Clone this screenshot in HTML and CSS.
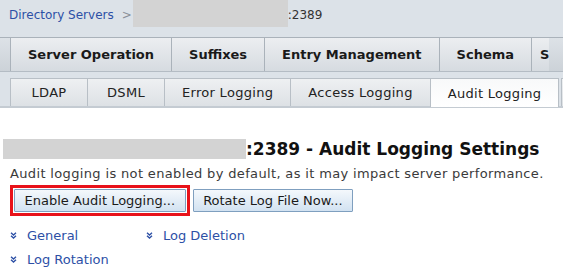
FILE: index.html
```html
<!DOCTYPE html>
<html lang="en">
<head>
    <meta charset="UTF-8">
    <title>Audit Logging Settings</title>
    <link rel="stylesheet" href="styles.css">
</head>
<body>
    <div class="masthead">
        <div class="crumbs">
            <a href="#" class="crumb-link">Directory Servers</a>
            <span class="crumb-sep">&gt;</span>
            <span class="redact crumb-redact"></span>
            <span class="crumb-port">:2389</span>
        </div>
        <div class="tabs main-tabs">
            <div class="tab">Server Operation</div>
            <div class="tab">Suffixes</div>
            <div class="tab">Entry Management</div>
            <div class="tab">Schema</div>
            <div class="tab">S</div>
        </div>
        <div class="tabs sub-tabs">
            <div class="tab narrow">LDAP</div>
            <div class="tab narrow">DSML</div>
            <div class="tab">Error Logging</div>
            <div class="tab">Access Logging</div>
            <div class="tab selected">Audit Logging</div>
            <div class="tab blank"></div>
        </div>
    </div>

    <div class="content">
        <h1 class="page-title"><span class="redact title-redact"></span>:2389 - Audit Logging Settings</h1>
        <p class="help">Audit logging is not enabled by default, as it may impact server performance.</p>
        <div class="actions">
            <span class="highlight"><button class="btn">Enable Audit Logging...</button></span>
            <button class="btn">Rotate Log File Now...</button>
        </div>
        <div class="jump-links">
            <a href="#" class="jump"><svg class="chev" width="7" height="7" viewBox="0 0 7 7"><polyline points="1,0.8 3.5,3 6,0.8" /><polyline points="1,3.8 3.5,6 6,3.8" /></svg>General</a>
            <a href="#" class="jump"><svg class="chev" width="7" height="7" viewBox="0 0 7 7"><polyline points="1,0.8 3.5,3 6,0.8" /><polyline points="1,3.8 3.5,6 6,3.8" /></svg>Log Deletion</a>
            <a href="#" class="jump"><svg class="chev" width="7" height="7" viewBox="0 0 7 7"><polyline points="1,0.8 3.5,3 6,0.8" /><polyline points="1,3.8 3.5,6 6,3.8" /></svg>Log Rotation</a>
        </div>
    </div>
</body>
</html>
```

FILE: styles.css
```css
body {
    margin: 0;
    font-family: "DejaVu Sans", sans-serif;
    font-size: 13px;
    color: #222;
    background: #ffffff;
    overflow: hidden;
}
.masthead {
    background: #dce2e8;
    border-bottom: 1px solid #c4cbd2;
}
.crumbs {
    height: 30px;
    display: flex;
    align-items: center;
    padding-left: 9px;
    font-size: 12px;
}
.crumb-link {
    color: #2d50a6;
    text-decoration: none;
}
.crumb-sep {
    color: #8a9098;
    margin-left: 8px;
}
.redact {
    display: inline-block;
    background: #d3d3d3;
}
.crumb-redact {
    width: 155px;
    height: 27px;
    margin-left: 1px;
    align-self: flex-start;
}
.crumb-port {
    color: #333;
}
.tabs {
    display: flex;
    white-space: nowrap;
    padding-left: 10px;
}
.main-tabs {
    margin-top: 7px;
    height: 33px;
    border-top: 1px solid #aab2ba;
    border-bottom: 1px solid #b4bcc4;
    background: linear-gradient(#dde2e7, #ccd2d8);
}
.main-tabs .tab {
    font-weight: bold;
    color: #1a1a1a;
    background: linear-gradient(#eceef1, #d6dbe0);
    border-left: 1px solid #aab2ba;
    padding: 0 17px;
    display: flex;
    align-items: center;
}
.main-tabs .tab:last-child {
    padding-right: 0;
    padding-left: 8px;
}
.sub-tabs {
    margin-top: 6px;
    height: 28px;
    border-bottom: 1px solid #c4cbd2;
}
.sub-tabs .tab {
    color: #222;
    letter-spacing: 0.3px;
    background: linear-gradient(#eef0f2, #dde1e5);
    border-top: 1px solid #b8bfc6;
    border-left: 1px solid #b8bfc6;
    padding: 0 17px;
    display: flex;
    align-items: center;
    justify-content: center;
}
.sub-tabs .narrow {
    min-width: 42px;
}
.sub-tabs .selected {
    background: linear-gradient(#f8f9fa, #ffffff);
    border-right: 1px solid #b8bfc6;
    margin-bottom: -1px;
    margin-right: 2px;
}
.sub-tabs .blank {
    flex: 1;
}
.content {
    padding: 0 10px;
}
.page-title {
    font-size: 17px;
    font-weight: bold;
    color: #111;
    margin: 30px 0 0 -7px;
    display: flex;
    align-items: center;
    height: 22px;
}
.title-redact {
    width: 243px;
    height: 20px;
}
.help {
    margin: 4px 0 0;
    color: #3a3a3a;
    letter-spacing: 0.35px;
    line-height: 20px;
}
.actions {
    display: flex;
    align-items: center;
    gap: 3px;
    margin-top: 1px;
}
.highlight {
    border: 3px solid #e8121a;
    padding: 1px;
    display: inline-flex;
}
.btn {
    font-family: "DejaVu Sans", sans-serif;
    font-size: 13px;
    color: #1a1a1a;
    height: 23px;
    padding: 0 9.5px;
    border: 1px solid #7f9fbf;
    border-radius: 1px;
    background: linear-gradient(#f4f8fc, #d2e2f1);
}
.jump-links {
    display: grid;
    grid-template-columns: 136px auto;
    row-gap: 7px;
    margin-top: 11px;
}
.jump {
    color: #2d50a6;
    text-decoration: none;
    display: flex;
    align-items: center;
    line-height: 17px;
}
.chev {
    fill: none;
    stroke: #2d50a6;
    stroke-width: 1.4;
    margin-right: 10px;
}
```
